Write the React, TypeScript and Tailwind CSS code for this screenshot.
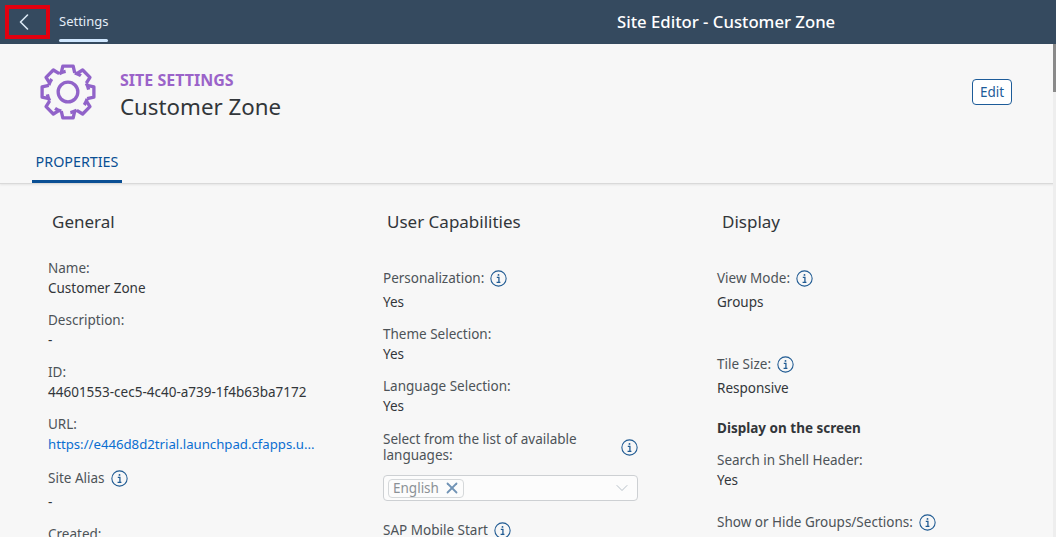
import { ChevronLeft, ChevronDown, X } from 'lucide-react';

const font = "font-['Noto_Sans',sans-serif]";

function InfoIcon() {
  return (
    <svg viewBox="0 0 16 16" className="w-[17px] h-[17px] shrink-0 text-[#1f5a92]" fill="none" stroke="currentColor">
      <circle cx="8" cy="8" r="7.2" strokeWidth="1" />
      <circle cx="8" cy="4.6" r="0.9" fill="currentColor" stroke="none" />
      <path d="M6.4 7h2v4.4M6.2 11.6h3.6" strokeWidth="1.2" />
    </svg>
  );
}

function GearIcon() {
  const teeth = [0, 45, 90, 135, 180, 225, 270, 315];
  return (
    <svg viewBox="0 0 56 56" className="w-[58px] h-[58px]" fill="none" stroke="#9163c9" strokeWidth="3.2" strokeLinejoin="round">
      {teeth.map((a) => (
        <path key={a} transform={`rotate(${a} 28 28)`} d="M21.5 9.5 L23 3 H33 L34.5 9.5" />
      ))}
      {teeth.map((a) => (
        <path key={`c${a}`} transform={`rotate(${a} 28 28)`} d="M34.5 9.5 Q38 10.6 40.5 12.3" />
      ))}
      <circle cx="28" cy="28" r="9.5" />
    </svg>
  );
}

function Field({ label, value, info, link }: { label: string; value: string; info?: boolean; link?: boolean }) {
  return (
    <div className="mb-3">
      <div className="flex items-center gap-[6px] h-5 text-[13.5px] text-[#4d5358]">
        <span>{label}</span>
        {info && <InfoIcon />}
      </div>
      <div className={`${info ? 'mt-1' : ''} h-5 leading-5 whitespace-nowrap ${link ? 'text-[13.2px] text-[#0a6ed1]' : 'text-[13.5px] text-[#32363a]'}`}>{value}</div>
    </div>
  );
}

export default function App() {
  return (
    <div className={`h-screen overflow-hidden bg-[#f7f7f7] flex flex-col relative ${font}`}>
      <header className="h-11 shrink-0 bg-[#354a5f] flex items-center text-white relative">
        <div className="ml-[5px] w-[45px] h-[34px] border-4 border-[#e2000f] flex items-center justify-center">
          <ChevronLeft className="w-7 h-7 text-[#dbe8f5] -ml-[7px]" strokeWidth={1.4} />
        </div>
        <div className="ml-[9px] h-11 flex items-center relative text-[13px] text-[#e4edf6]">
          Settings
          <span className="absolute left-0 right-0 bottom-[2px] h-[3px] rounded-sm bg-[#d1e8ff]" />
        </div>
        <div className="absolute left-[617px] text-[16.7px] font-medium text-white">Site Editor - Customer Zone</div>
      </header>

      <div className="h-[140px] shrink-0 border-b border-[#d9d9d9] shadow-[0_1px_2px_rgba(0,0,0,0.08)] relative">
        <div className="flex items-start pl-[39px] pt-[19px]">
          <GearIcon />
          <div className="ml-[23px] mt-[5px]">
            <div className="text-[16px] leading-[24px] font-bold text-[#9b63c9]">SITE SETTINGS</div>
            <div className="text-[22.3px] leading-[30px] text-[#32363a]">Customer Zone</div>
          </div>
          <button className="ml-auto mr-[44px] mt-[16px] w-[40px] h-[26px] rounded border border-[#1d5c99] bg-white text-[13.5px] text-[#1d5c99] flex items-center justify-center">
            Edit
          </button>
        </div>
        <div className="absolute left-8 bottom-0 w-[90px] h-[42px] flex justify-center pt-[10px] border-b-[3px] border-[#0a4f94] text-[14.3px] text-[#0a4f94] whitespace-nowrap">
          PROPERTIES
        </div>
      </div>

      <main className="grid grid-cols-[335px_334px_1fr] pt-[26px]">
        <section className="pl-12">
          <h2 className="pl-1 h-6 leading-6 text-[17px] text-[#32363a] mb-[24px]">General</h2>
          <div className="w-[266px]">
            <Field label="Name:" value="Customer Zone" />
            <Field label="Description:" value="-" />
            <Field label="ID:" value="44601553-cec5-4c40-a739-1f4b63ba7172" />
            <div className="mb-[14px]">
              <Field label="URL:" value="https://e446d8d2trial.launchpad.cfapps.u..." link />
            </div>
            <Field label="Site Alias" value="-" info />
            <Field label="Created:" value="" />
          </div>
        </section>

        <section className="pl-[48px]">
          <h2 className="pl-1 h-6 leading-6 text-[17px] text-[#32363a] mb-[34px]">User Capabilities</h2>
          <div className="w-[255px]">
            <Field label="Personalization:" value="Yes" info />
            <Field label="Theme Selection:" value="Yes" />
            <Field label="Language Selection:" value="Yes" />
            <div className="flex items-center justify-between text-[13.5px] leading-4 text-[#4d5358] mt-[15px]">
              <span className="w-[215px]">Select from the list of available languages:</span>
              <InfoIcon />
            </div>
            <div className="mt-[12px] h-[26px] rounded-sm border border-[#cdd0d3] bg-white/60 flex items-center pl-1 pr-[5px] justify-between">
              <div className="h-[19px] rounded border border-[#d5d8da] flex items-center gap-[4px] pl-1 pr-[2px] text-[13.5px] text-[#8b9196]">
                English <X className="w-[18px] h-[18px] text-[#7193b5]" strokeWidth={2.4} />
              </div>
              <ChevronDown className="w-5 h-5 text-[#a9b4be]" strokeWidth={1} />
            </div>
            <div className="mt-[19px] flex items-center gap-[6px] h-5 text-[13.5px] text-[#4d5358]">
              <span>SAP Mobile Start</span>
              <InfoIcon />
            </div>
          </div>
        </section>

        <section className="pl-[48px]">
          <h2 className="pl-[5px] h-6 leading-6 text-[17px] text-[#32363a] mb-[34px]">Display</h2>
          <div className="mb-[42px]"><Field label="View Mode:" value="Groups" info /></div>
          <Field label="Tile Size:" value="Responsive" info />
          <div className="mt-[20px] mb-3 h-5 leading-5 text-[13.5px] font-bold text-[#32363a]">Display on the screen</div>
          <Field label="Search in Shell Header:" value="Yes" />
          <div className="mt-[22px] flex items-center gap-[6px] h-5 text-[13.5px] text-[#4d5358]">
            <span>Show or Hide Groups/Sections:</span>
            <InfoIcon />
          </div>
        </section>
      </main>

      <div className="absolute right-0 top-11 bottom-0 w-[3px] bg-[#eeeeee]">
        <div className="h-[48px] bg-[#8a8a8a]" />
      </div>
    </div>
  );
}
